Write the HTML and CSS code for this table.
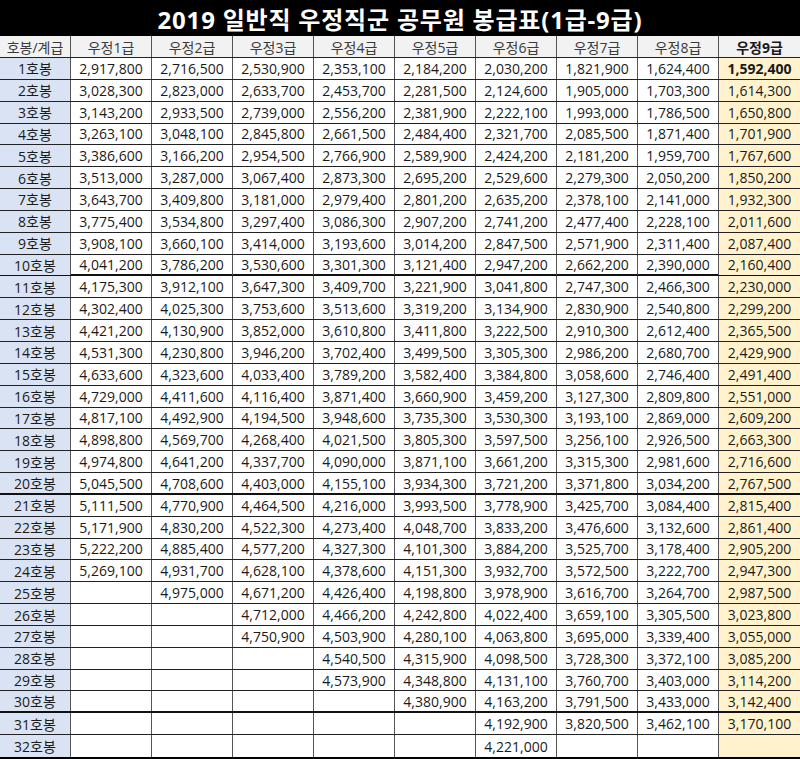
FILE: index.html
```html
<!DOCTYPE html>
<html lang="ko">
<head>
<meta charset="utf-8">
<title>2019 일반직 우정직군 공무원 봉급표</title>
<link rel="stylesheet" href="styles.css">
</head>
<body>
<div class="sheet">
  <div class="title">2019 일반직 우정직군 공무원 봉급표(1급-9급)</div>
  <div class="row head"><div class="c">호봉/계급</div><div class="c">우정1급</div><div class="c">우정2급</div><div class="c">우정3급</div><div class="c">우정4급</div><div class="c">우정5급</div><div class="c">우정6급</div><div class="c">우정7급</div><div class="c">우정8급</div><div class="c y b">우정9급</div></div>
  <div class="row"><div class="c h">1호봉</div><div class="c">2,917,800</div><div class="c">2,716,500</div><div class="c">2,530,900</div><div class="c">2,353,100</div><div class="c">2,184,200</div><div class="c">2,030,200</div><div class="c">1,821,900</div><div class="c">1,624,400</div><div class="c y b">1,592,400</div></div>
  <div class="row"><div class="c h">2호봉</div><div class="c">3,028,300</div><div class="c">2,823,000</div><div class="c">2,633,700</div><div class="c">2,453,700</div><div class="c">2,281,500</div><div class="c">2,124,600</div><div class="c">1,905,000</div><div class="c">1,703,300</div><div class="c y">1,614,300</div></div>
  <div class="row"><div class="c h">3호봉</div><div class="c">3,143,200</div><div class="c">2,933,500</div><div class="c">2,739,000</div><div class="c">2,556,200</div><div class="c">2,381,900</div><div class="c">2,222,100</div><div class="c">1,993,000</div><div class="c">1,786,500</div><div class="c y">1,650,800</div></div>
  <div class="row"><div class="c h">4호봉</div><div class="c">3,263,100</div><div class="c">3,048,100</div><div class="c">2,845,800</div><div class="c">2,661,500</div><div class="c">2,484,400</div><div class="c">2,321,700</div><div class="c">2,085,500</div><div class="c">1,871,400</div><div class="c y">1,701,900</div></div>
  <div class="row"><div class="c h">5호봉</div><div class="c">3,386,600</div><div class="c">3,166,200</div><div class="c">2,954,500</div><div class="c">2,766,900</div><div class="c">2,589,900</div><div class="c">2,424,200</div><div class="c">2,181,200</div><div class="c">1,959,700</div><div class="c y">1,767,600</div></div>
  <div class="row"><div class="c h">6호봉</div><div class="c">3,513,000</div><div class="c">3,287,000</div><div class="c">3,067,400</div><div class="c">2,873,300</div><div class="c">2,695,200</div><div class="c">2,529,600</div><div class="c">2,279,300</div><div class="c">2,050,200</div><div class="c y">1,850,200</div></div>
  <div class="row"><div class="c h">7호봉</div><div class="c">3,643,700</div><div class="c">3,409,800</div><div class="c">3,181,000</div><div class="c">2,979,400</div><div class="c">2,801,200</div><div class="c">2,635,200</div><div class="c">2,378,100</div><div class="c">2,141,000</div><div class="c y">1,932,300</div></div>
  <div class="row"><div class="c h">8호봉</div><div class="c">3,775,400</div><div class="c">3,534,800</div><div class="c">3,297,400</div><div class="c">3,086,300</div><div class="c">2,907,200</div><div class="c">2,741,200</div><div class="c">2,477,400</div><div class="c">2,228,100</div><div class="c y">2,011,600</div></div>
  <div class="row"><div class="c h">9호봉</div><div class="c">3,908,100</div><div class="c">3,660,100</div><div class="c">3,414,000</div><div class="c">3,193,600</div><div class="c">3,014,200</div><div class="c">2,847,500</div><div class="c">2,571,900</div><div class="c">2,311,400</div><div class="c y">2,087,400</div></div>
  <div class="row thick"><div class="c h">10호봉</div><div class="c">4,041,200</div><div class="c">3,786,200</div><div class="c">3,530,600</div><div class="c">3,301,300</div><div class="c">3,121,400</div><div class="c">2,947,200</div><div class="c">2,662,200</div><div class="c">2,390,000</div><div class="c y">2,160,400</div></div>
  <div class="row"><div class="c h">11호봉</div><div class="c">4,175,300</div><div class="c">3,912,100</div><div class="c">3,647,300</div><div class="c">3,409,700</div><div class="c">3,221,900</div><div class="c">3,041,800</div><div class="c">2,747,300</div><div class="c">2,466,300</div><div class="c y">2,230,000</div></div>
  <div class="row"><div class="c h">12호봉</div><div class="c">4,302,400</div><div class="c">4,025,300</div><div class="c">3,753,600</div><div class="c">3,513,600</div><div class="c">3,319,200</div><div class="c">3,134,900</div><div class="c">2,830,900</div><div class="c">2,540,800</div><div class="c y">2,299,200</div></div>
  <div class="row"><div class="c h">13호봉</div><div class="c">4,421,200</div><div class="c">4,130,900</div><div class="c">3,852,000</div><div class="c">3,610,800</div><div class="c">3,411,800</div><div class="c">3,222,500</div><div class="c">2,910,300</div><div class="c">2,612,400</div><div class="c y">2,365,500</div></div>
  <div class="row"><div class="c h">14호봉</div><div class="c">4,531,300</div><div class="c">4,230,800</div><div class="c">3,946,200</div><div class="c">3,702,400</div><div class="c">3,499,500</div><div class="c">3,305,300</div><div class="c">2,986,200</div><div class="c">2,680,700</div><div class="c y">2,429,900</div></div>
  <div class="row"><div class="c h">15호봉</div><div class="c">4,633,600</div><div class="c">4,323,600</div><div class="c">4,033,400</div><div class="c">3,789,200</div><div class="c">3,582,400</div><div class="c">3,384,800</div><div class="c">3,058,600</div><div class="c">2,746,400</div><div class="c y">2,491,400</div></div>
  <div class="row"><div class="c h">16호봉</div><div class="c">4,729,000</div><div class="c">4,411,600</div><div class="c">4,116,400</div><div class="c">3,871,400</div><div class="c">3,660,900</div><div class="c">3,459,200</div><div class="c">3,127,300</div><div class="c">2,809,800</div><div class="c y">2,551,000</div></div>
  <div class="row"><div class="c h">17호봉</div><div class="c">4,817,100</div><div class="c">4,492,900</div><div class="c">4,194,500</div><div class="c">3,948,600</div><div class="c">3,735,300</div><div class="c">3,530,300</div><div class="c">3,193,100</div><div class="c">2,869,000</div><div class="c y">2,609,200</div></div>
  <div class="row"><div class="c h">18호봉</div><div class="c">4,898,800</div><div class="c">4,569,700</div><div class="c">4,268,400</div><div class="c">4,021,500</div><div class="c">3,805,300</div><div class="c">3,597,500</div><div class="c">3,256,100</div><div class="c">2,926,500</div><div class="c y">2,663,300</div></div>
  <div class="row"><div class="c h">19호봉</div><div class="c">4,974,800</div><div class="c">4,641,200</div><div class="c">4,337,700</div><div class="c">4,090,000</div><div class="c">3,871,100</div><div class="c">3,661,200</div><div class="c">3,315,300</div><div class="c">2,981,600</div><div class="c y">2,716,600</div></div>
  <div class="row thick"><div class="c h">20호봉</div><div class="c">5,045,500</div><div class="c">4,708,600</div><div class="c">4,403,000</div><div class="c">4,155,100</div><div class="c">3,934,300</div><div class="c">3,721,200</div><div class="c">3,371,800</div><div class="c">3,034,200</div><div class="c y">2,767,500</div></div>
  <div class="row"><div class="c h">21호봉</div><div class="c">5,111,500</div><div class="c">4,770,900</div><div class="c">4,464,500</div><div class="c">4,216,000</div><div class="c">3,993,500</div><div class="c">3,778,900</div><div class="c">3,425,700</div><div class="c">3,084,400</div><div class="c y">2,815,400</div></div>
  <div class="row"><div class="c h">22호봉</div><div class="c">5,171,900</div><div class="c">4,830,200</div><div class="c">4,522,300</div><div class="c">4,273,400</div><div class="c">4,048,700</div><div class="c">3,833,200</div><div class="c">3,476,600</div><div class="c">3,132,600</div><div class="c y">2,861,400</div></div>
  <div class="row"><div class="c h">23호봉</div><div class="c">5,222,200</div><div class="c">4,885,400</div><div class="c">4,577,200</div><div class="c">4,327,300</div><div class="c">4,101,300</div><div class="c">3,884,200</div><div class="c">3,525,700</div><div class="c">3,178,400</div><div class="c y">2,905,200</div></div>
  <div class="row"><div class="c h">24호봉</div><div class="c">5,269,100</div><div class="c">4,931,700</div><div class="c">4,628,100</div><div class="c">4,378,600</div><div class="c">4,151,300</div><div class="c">3,932,700</div><div class="c">3,572,500</div><div class="c">3,222,700</div><div class="c y">2,947,300</div></div>
  <div class="row"><div class="c h">25호봉</div><div class="c"></div><div class="c">4,975,000</div><div class="c">4,671,200</div><div class="c">4,426,400</div><div class="c">4,198,800</div><div class="c">3,978,900</div><div class="c">3,616,700</div><div class="c">3,264,700</div><div class="c y">2,987,500</div></div>
  <div class="row"><div class="c h">26호봉</div><div class="c"></div><div class="c"></div><div class="c">4,712,000</div><div class="c">4,466,200</div><div class="c">4,242,800</div><div class="c">4,022,400</div><div class="c">3,659,100</div><div class="c">3,305,500</div><div class="c y">3,023,800</div></div>
  <div class="row"><div class="c h">27호봉</div><div class="c"></div><div class="c"></div><div class="c">4,750,900</div><div class="c">4,503,900</div><div class="c">4,280,100</div><div class="c">4,063,800</div><div class="c">3,695,000</div><div class="c">3,339,400</div><div class="c y">3,055,000</div></div>
  <div class="row"><div class="c h">28호봉</div><div class="c"></div><div class="c"></div><div class="c"></div><div class="c">4,540,500</div><div class="c">4,315,900</div><div class="c">4,098,500</div><div class="c">3,728,300</div><div class="c">3,372,100</div><div class="c y">3,085,200</div></div>
  <div class="row"><div class="c h">29호봉</div><div class="c"></div><div class="c"></div><div class="c"></div><div class="c">4,573,900</div><div class="c">4,348,800</div><div class="c">4,131,100</div><div class="c">3,760,700</div><div class="c">3,403,000</div><div class="c y">3,114,200</div></div>
  <div class="row thick"><div class="c h">30호봉</div><div class="c"></div><div class="c"></div><div class="c"></div><div class="c"></div><div class="c">4,380,900</div><div class="c">4,163,200</div><div class="c">3,791,500</div><div class="c">3,433,000</div><div class="c y">3,142,400</div></div>
  <div class="row"><div class="c h">31호봉</div><div class="c"></div><div class="c"></div><div class="c"></div><div class="c"></div><div class="c"></div><div class="c">4,192,900</div><div class="c">3,820,500</div><div class="c">3,462,100</div><div class="c y">3,170,100</div></div>
  <div class="row last"><div class="c h">32호봉</div><div class="c"></div><div class="c"></div><div class="c"></div><div class="c"></div><div class="c"></div><div class="c">4,221,000</div><div class="c"></div><div class="c"></div><div class="c y"></div></div>
</div>
</body>
</html>
```

FILE: styles.css
```css
* { box-sizing: border-box; }
html, body { margin: 0; padding: 0; background: #fff; }
body {
  font-family: "Open Sans", "Noto Sans CJK KR", sans-serif;
  color: #1a1a1a;
}
.sheet {
  width: 800px;
  display: flex;
  flex-direction: column;
}
.title {
  height: 36px;
  background: #000;
  color: #fff;
  font-weight: 700;
  font-size: 24px;
  display: flex;
  align-items: center;
  justify-content: center;
  letter-spacing: 0.8px;
}
.row {
  display: grid;
  grid-template-columns: 71px repeat(9, 81px);
  height: 21.85px;
  border-bottom: 1px solid #222;
  font-size: 14px;
}
.row.head {
  height: 22px;
  background: #f2f2f2;
  color: #3a3a3a;
}
.row.thick { border-bottom: 2px solid #111; }
.row.last { border-bottom: 2px solid #000; height: 23.85px; }
.c {
  display: flex;
  align-items: center;
  justify-content: center;
  border-right: 1px solid #555;
  white-space: nowrap;
}
.c:last-child { border-right: none; }
.h { background: #dae3f3; }
.y { background: #fff2cc; }
.head .y { background: #f2f2f2; color: #1a1a1a; }
.b { font-weight: 700; }
```
